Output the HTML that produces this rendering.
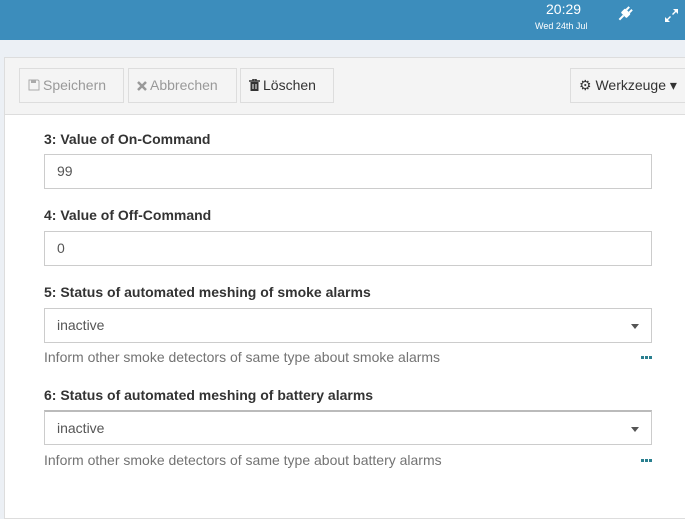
<!DOCTYPE html>
<html><head><style>
body{margin:0;width:685px;height:482px;overflow:hidden;background:#ecf0f5;font-family:"Liberation Sans",sans-serif;position:relative}
.hdr{position:absolute;left:0;top:0;width:685px;height:40px;background:#3c8dbc;color:#fff}
.panel{position:absolute;left:4px;top:57px;width:690px;height:460px;border:1px solid #ddd;background:#fff}
.tb{height:56px;background:#f4f4f4;border-bottom:1px solid #ddd;position:relative}
.btn{position:absolute;top:10px;height:35px;border:1px solid #ddd;background:#f4f4f4;font-size:14px;line-height:33px;box-sizing:border-box;padding:0 8px;color:#999;white-space:nowrap}
.btn svg{vertical-align:-1px;margin-right:3px}
.lbl{position:absolute;left:44px;font-size:14px;font-weight:bold;color:#333}
.in{position:absolute;left:44px;width:608px;height:35px;border:1px solid #ccc;box-sizing:border-box;font-size:14px;line-height:33px;padding-left:12px;color:#555;background:#fff}
.help{position:absolute;left:44px;font-size:14px;color:#737373}
.dots{position:absolute;left:641px;width:11px;height:3px;background:linear-gradient(90deg,#2a7f8f 3px,transparent 3px,transparent 4px,#2a7f8f 4px,#2a7f8f 7px,transparent 7px,transparent 8px,#2a7f8f 8px)}
.car{position:absolute;right:12px;top:15px;border-left:4px solid transparent;border-right:4px solid transparent;border-top:5px solid #555}
</style></head><body>
<div class="hdr">
<div style="position:absolute;left:546px;top:1px;font-size:14px">20:29</div>
<div style="position:absolute;left:535px;top:21px;font-size:9px">Wed 24th Jul</div>
<svg style="position:absolute;left:617px;top:6px" width="16" height="16" viewBox="0 0 16 16"><g fill="#fff" transform="rotate(45 8 8)"><rect x="4" y="4" width="8" height="6" rx="1"/><rect x="5" y="0" width="2" height="4"/><rect x="9" y="0" width="2" height="4"/><rect x="7" y="10" width="2" height="6"/></g></svg>
<svg style="position:absolute;left:665px;top:9px" width="13" height="13" viewBox="0 0 13 13"><g fill="#fff"><path d="M13 0H8l2 2-3 3 1 1 3-3 2 2z"/><path d="M0 13h5l-2-2 3-3-1-1-3 3-2-2z"/></g></svg>
</div>
<div class="panel"><div class="tb">
<div class="btn" style="left:14px;width:105px"><svg width="12" height="12" viewBox="0 0 12 12"><path d="M1 1h9l1 1v9H1z" fill="none" stroke="#aaa"/><rect x="3" y="1" width="5" height="3" fill="#aaa"/></svg>Speichern</div>
<div class="btn" style="left:123px;width:109px"><svg width="10" height="10" viewBox="0 0 10 10"><path d="M1 1l8 8M9 1l-8 8" stroke="#999" stroke-width="2.5"/></svg>Abbrechen</div>
<div class="btn" style="left:235px;width:94px;color:#333"><svg width="11" height="12" viewBox="0 0 11 12"><path d="M0 2h11M4 2V0h3v2" stroke="#333" stroke-width="1.5" fill="none"/><rect x="1.5" y="3" width="8" height="9" fill="#333"/><path d="M4 5v5M7 5v5" stroke="#f4f4f4"/></svg>Löschen</div>
<div class="btn" style="left:565px;width:130px;color:#333">⚙ Werkzeuge ▾</div>
</div></div>
<div class="lbl" style="top:131px">3: Value of On-Command</div>
<div class="in" style="top:154px">99</div>
<div class="lbl" style="top:207px">4: Value of Off-Command</div>
<div class="in" style="top:231px">0</div>
<div class="lbl" style="top:284px">5: Status of automated meshing of smoke alarms</div>
<div class="in" style="top:308px">inactive<div class="car"></div></div>
<div class="help" style="top:349px">Inform other smoke detectors of same type about smoke alarms</div>
<div class="dots" style="top:356px"></div>
<div class="lbl" style="top:387px">6: Status of automated meshing of battery alarms</div>
<div class="in" style="top:410px;border-top:2px solid #bbb">inactive<div class="car"></div></div>
<div class="help" style="top:452px">Inform other smoke detectors of same type about battery alarms</div>
<div class="dots" style="top:459px"></div>
</body></html>
